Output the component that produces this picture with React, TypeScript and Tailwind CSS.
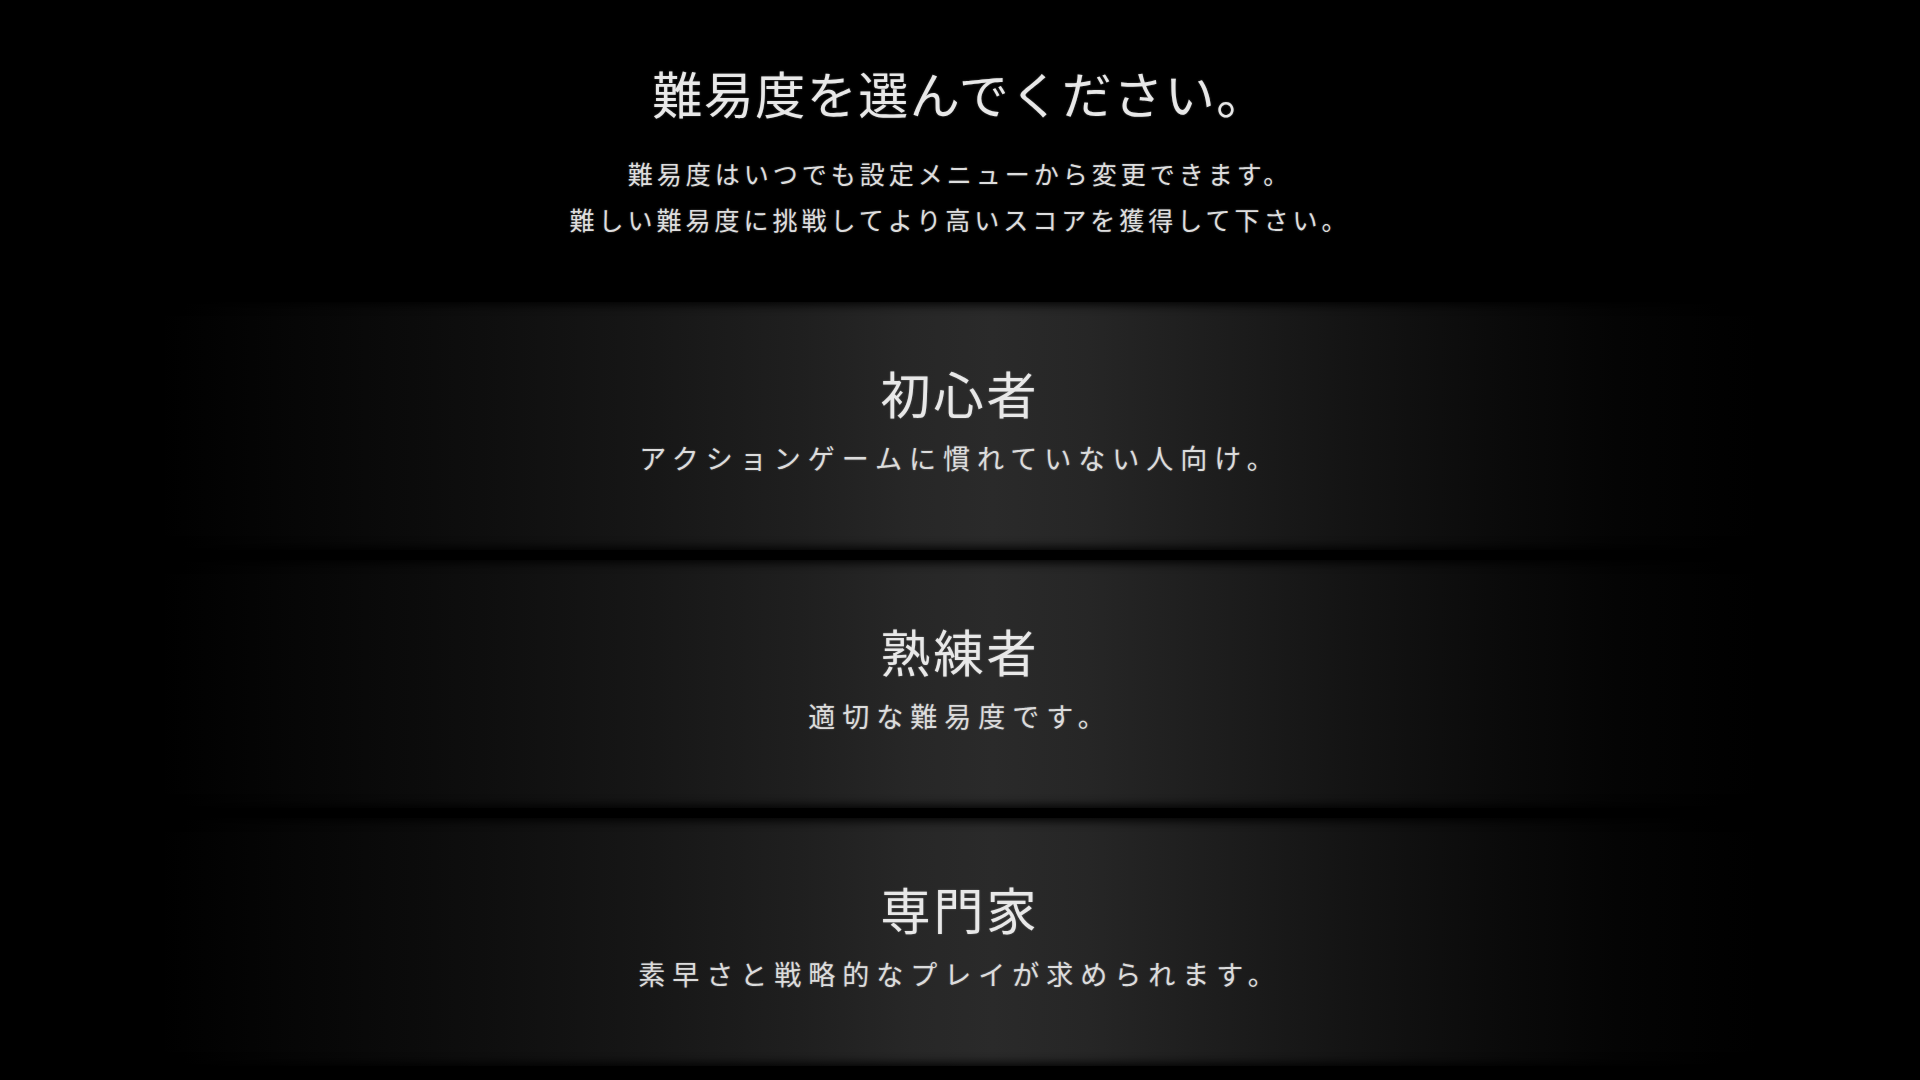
import React from "react";

const levels = [
  { name: "初心者", desc: "アクションゲームに慣れていない人向け。" },
  { name: "熟練者", desc: "適切な難易度です。" },
  { name: "専門家", desc: "素早さと戦略的なプレイが求められます。" },
];

export default function App() {
  return (
    <div
      className="w-full h-screen overflow-hidden bg-black text-[#e4e4e4] flex flex-col items-center"
      style={{ fontFamily: '"Noto Sans CJK JP", "Noto Sans", sans-serif' }}
    >
      <header className="pt-[62px] flex flex-col items-center text-center [text-shadow:0_0_2px_rgba(255,255,255,0.35)]">
        <h1 className="text-[50px] leading-[60px] font-normal tracking-[1.5px] text-[#e8e8e8]">
          難易度を選んでください。
        </h1>
        <div className="mt-[28px] text-[25px] leading-[46px] tracking-[4px] text-[#dedede]">
          <p>難易度はいつでも設定メニューから変更できます。</p>
          <p>難しい難易度に挑戦してより高いスコアを獲得して下さい。</p>
        </div>
      </header>

      <main className="mt-[60px] w-[1600px] flex flex-col gap-[10px]">
        {levels.map((l) => (
          <button
            key={l.name}
            type="button"
            className="h-[248px] w-full flex flex-col items-center pt-[58px] [text-shadow:0_0_2px_rgba(255,255,255,0.35)] bg-[linear-gradient(90deg,#000_0%,#070707_10%,#0e0e0e_20%,#161616_30%,#1f1f1f_40%,#272727_47%,#2a2a2a_52%,#262626_58%,#1d1d1d_66%,#141414_74%,#0b0b0b_83%,#040404_91%,#000_100%)] shadow-[inset_0_9px_10px_-6px_rgba(0,0,0,0.9),inset_0_-9px_10px_-6px_rgba(0,0,0,0.9)]"
          >
            <span className="text-[50px] leading-[64px] tracking-[3px] text-[#e8e8e8]">
              {l.name}
            </span>
            <span className="mt-[14px] text-[27px] leading-[40px] tracking-[7px] text-[#dcdcdc]">
              {l.desc}
            </span>
          </button>
        ))}
      </main>
    </div>
  );
}
